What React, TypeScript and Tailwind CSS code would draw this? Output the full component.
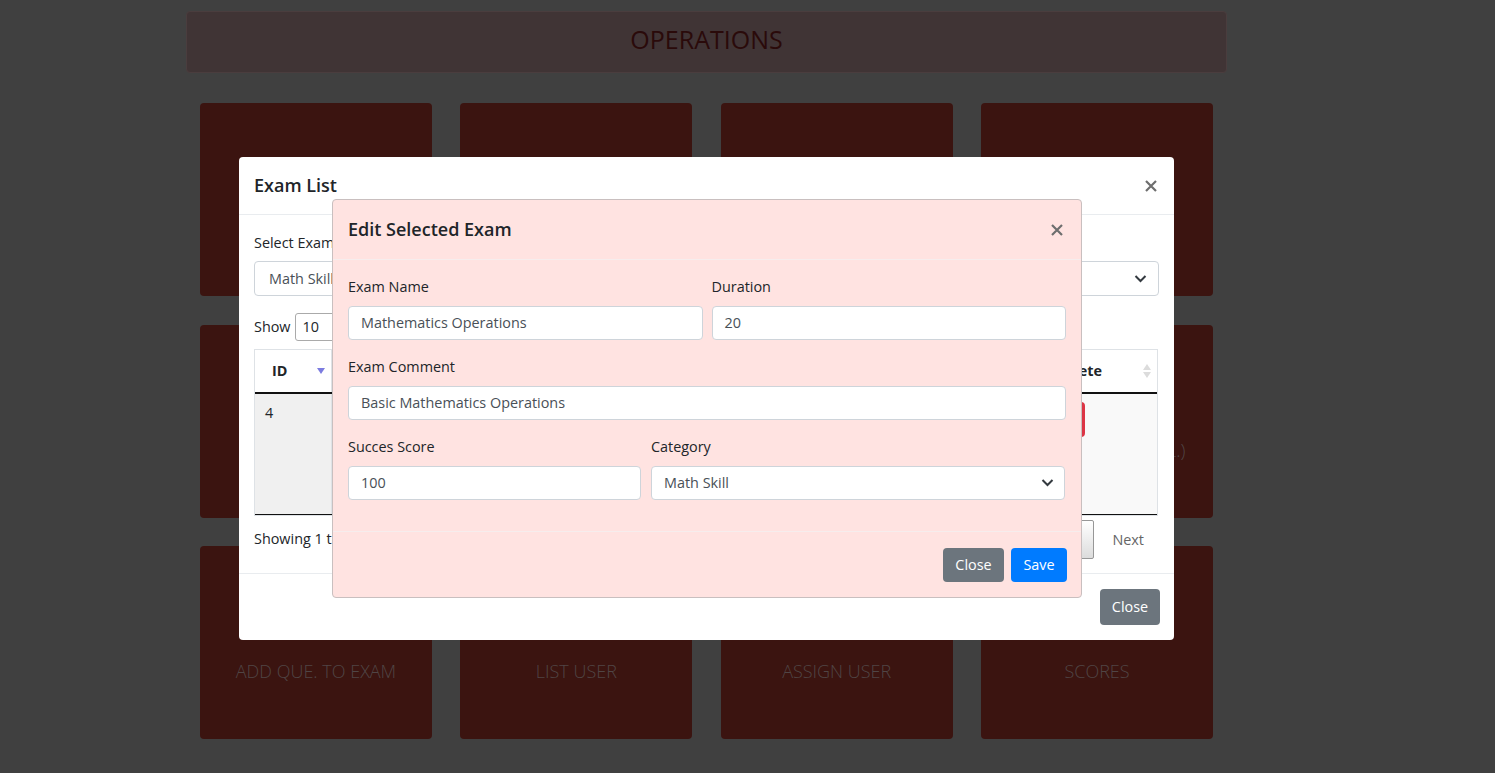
import React from "react";

const tiles = [
  "ADD EXAM",
  "ADD QUESTION",
  "ADD CATEGORY",
  "EXAM LIST",
  "QUESTION LIST",
  "CATEGORY LIST",
  "USER LIST",
  "EXAM LIST (EDIT/DEL.)",
  "ADD QUE. TO EXAM",
  "LIST USER",
  "ASSIGN USER",
  "SCORES",
];

const Chevron = () => (
  <svg width="13" height="9" viewBox="0 0 13 9" className="shrink-0">
    <path d="M1.5 2l5 5 5-5" fill="none" stroke="#343a40" strokeWidth="2" />
  </svg>
);

const CloseX = () => (
  <svg width="12" height="12" viewBox="0 0 12 12" className="shrink-0">
    <path
      d="M1 1l10 10M11 1L1 11"
      fill="none"
      stroke="#6e6e6e"
      strokeWidth="2.2"
    />
  </svg>
);

const Field = ({
  label,
  value,
  select,
}: {
  label: string;
  value: string;
  select?: boolean;
}) => (
  <div className="mb-[15px] flex flex-col">
    <label className="mb-[6.5px] text-[14.4px] leading-[24px] text-[#212529]">
      {label}
    </label>
    <div className="flex h-[34.5px] items-center justify-between rounded-[4px] border border-[#ced4da] bg-white pr-[10px] pl-[12px] text-[14.4px] text-[#495057]">
      <span>{value}</span>
      {select && <Chevron />}
    </div>
  </div>
);

const EditExamModal = () => (
  <div className="absolute top-[199px] left-[332px] w-[750px] rounded-[4px] border border-[#c9bfbf] bg-[#ffe3e1]">
    <div className="flex h-[60px] items-center justify-between border-b border-[#f6eded] pr-[18px] pl-[15px]">
      <h5 className="text-[18px] font-semibold text-[#212529]">
        Edit Selected Exam
      </h5>
      <CloseX />
    </div>
    <div className="px-[15px] pt-[15px] pb-[16px]">
      <div className="grid grid-cols-2 gap-x-[9px]">
        <Field label="Exam Name" value="Mathematics Operations" />
        <Field label="Duration" value="20" />
      </div>
      <Field label="Exam Comment" value="Basic Mathematics Operations" />
      <div className="grid grid-cols-[293px_1fr] gap-x-[10px] pr-[1px]">
        <Field label="Succes Score" value="100" />
        <Field label="Category" value="Math Skill" select />
      </div>
    </div>
    <div className="flex justify-end gap-[7px] border-t border-[#f6eded] px-[14px] pt-[15.5px] pb-[15px]">
      <button className="h-[34px] w-[61px] rounded-[4px] bg-[#6c757d] text-[14.4px] text-white">
        Close
      </button>
      <button className="h-[34px] w-[56px] rounded-[4px] bg-[#007bff] text-[14.4px] text-white">
        Save
      </button>
    </div>
  </div>
);

const SortDown = () => (
  <svg width="8" height="6" viewBox="0 0 8 6">
    <path d="M0 0h8L4 6z" fill="#7c7ce0" />
  </svg>
);

const SortBoth = () => (
  <svg width="8" height="16" viewBox="0 0 8 16">
    <path d="M0 7h8L4 1z" fill="#dcdcdc" />
    <path d="M0 9h8L4 15z" fill="#dcdcdc" />
  </svg>
);

const columns = [
  {name: "ID", width: 77},
  {name: "Exam Name", width: 150},
  {name: "Comment", width: 170},
  {name: "Duration", width: 90},
  {name: "Success Score", width: 110},
  {name: "Category", width: 107},
  {name: "Edit", width: 80},
  {name: "Delete", width: 119},
];

const ExamListModal = () => (
  <div className="absolute top-[157px] left-[239px] w-[935px] rounded-[4px] bg-white text-[#212529]">
    <div className="flex h-[58px] items-center justify-between border-b border-[#e9ecef] pr-[17px] pl-[15px]">
      <h5 className="text-[18px] font-semibold">Exam List</h5>
      <CloseX />
    </div>
    <div className="px-[15px] pt-[17px]">
      <div className="text-[14.4px] leading-[22px]">Select Exam Category</div>
      <div className="mt-[7px] flex h-[35px] items-center justify-between rounded-[4px] border border-[#ced4da] pr-[11px] pl-[14px] text-[14.4px] text-[#495057]">
        <span>Math Skill</span>
        <Chevron />
      </div>
      <div className="mt-[17px] flex items-center gap-[4px] text-[14.4px]">
        <span>Show</span>
        <div className="flex h-[28px] w-[60px] items-center rounded-[3px] border border-[#aaa] pl-[7px]">
          10
        </div>
        <span>entries</span>
      </div>
      <div className="mt-[8px] w-[904px] border border-[#dee2e6]">
        <div className="flex h-[44px] border-b-2 border-[#111]">
          {columns.map((c) => (
            <div
              key={c.name}
              style={{width: c.width}}
              className="flex items-center justify-between border-r border-[#dee2e6] pr-[6px] pl-[17px] text-[14.4px] font-bold last:border-r-0">
              <span>{c.name}</span>
              {c.name === "ID" ? <SortDown /> : <SortBoth />}
            </div>
          ))}
        </div>
        <div className="flex h-[121px] border-b border-[#111] bg-[#f9f9f9]">
          {columns.map((c) => (
            <div
              key={c.name}
              style={{width: c.width}}
              className={`border-r border-[#dee2e6] px-[10px] pt-[8px] text-[14.4px] last:border-r-0 ${
                c.name === "ID" ? "bg-[#f0f0f0]" : ""
              }`}>
              {c.name === "ID" && "4"}
              {c.name === "Exam Name" && "Mathematics Operations"}
              {c.name === "Comment" && "Basic Mathematics Operations"}
              {c.name === "Duration" && "20"}
              {c.name === "Success Score" && "100"}
              {c.name === "Category" && "Math Skill"}
              {c.name === "Edit" && (
                <div className="h-[35px] w-[44px] rounded-[4px] bg-[#ffc107]" />
              )}
              {c.name === "Delete" && (
                <div className="h-[35px] w-[37px] rounded-[4px] bg-[#dc3545]" />
              )}
            </div>
          ))}
        </div>
      </div>
      <div className="flex h-[57px] items-start justify-between">
        <span className="mt-[12px] text-[14.4px] leading-[22px]">
          Showing 1 to 1 of 1 entries
        </span>
        <div className="mt-[4px] flex items-center gap-[18px] pr-[15px] text-[14.4px] text-[#666]">
          <span>Previous</span>
          <div className="flex h-[39px] w-[34px] items-center justify-center rounded-[2px] border border-[#979797] bg-gradient-to-b from-white to-[#dcdcdc] text-[#333]">
            1
          </div>
          <span>Next</span>
        </div>
      </div>
    </div>
    <div className="flex justify-end border-t border-[#e9ecef] px-[14px] pt-[15px] pb-[15px]">
      <button className="h-[36px] w-[60px] rounded-[4px] bg-[#6c757d] text-[14.4px] text-white">
        Close
      </button>
    </div>
  </div>
);

const App = () => {
  return (
    <div className="relative min-h-[773px] overflow-hidden bg-[#404040] font-['Open_Sans',sans-serif]">
      <div className="ml-[186px] w-[1041px] pt-[11px]">
        <div className="flex h-[62px] items-center justify-center rounded-[4px] border border-[#4a3d3e] bg-[#403435]">
          <h2 className="-mt-[4px] text-[25px] text-[#2a0a0a]">OPERATIONS</h2>
        </div>
        <div className="mt-[30px] grid grid-cols-4 gap-x-[28.33px] gap-y-[28.5px] px-[14px]">
          {tiles.map((t) => (
            <div
              key={t}
              className="flex h-[193px] flex-col items-center rounded-[4px] bg-[#3b1410] pt-[112px]">
              <span className="text-[18px] font-light whitespace-nowrap text-[#504545]">
                {t}
              </span>
            </div>
          ))}
        </div>
      </div>
      <ExamListModal />
      <EditExamModal />
    </div>
  );
};

export default App;
